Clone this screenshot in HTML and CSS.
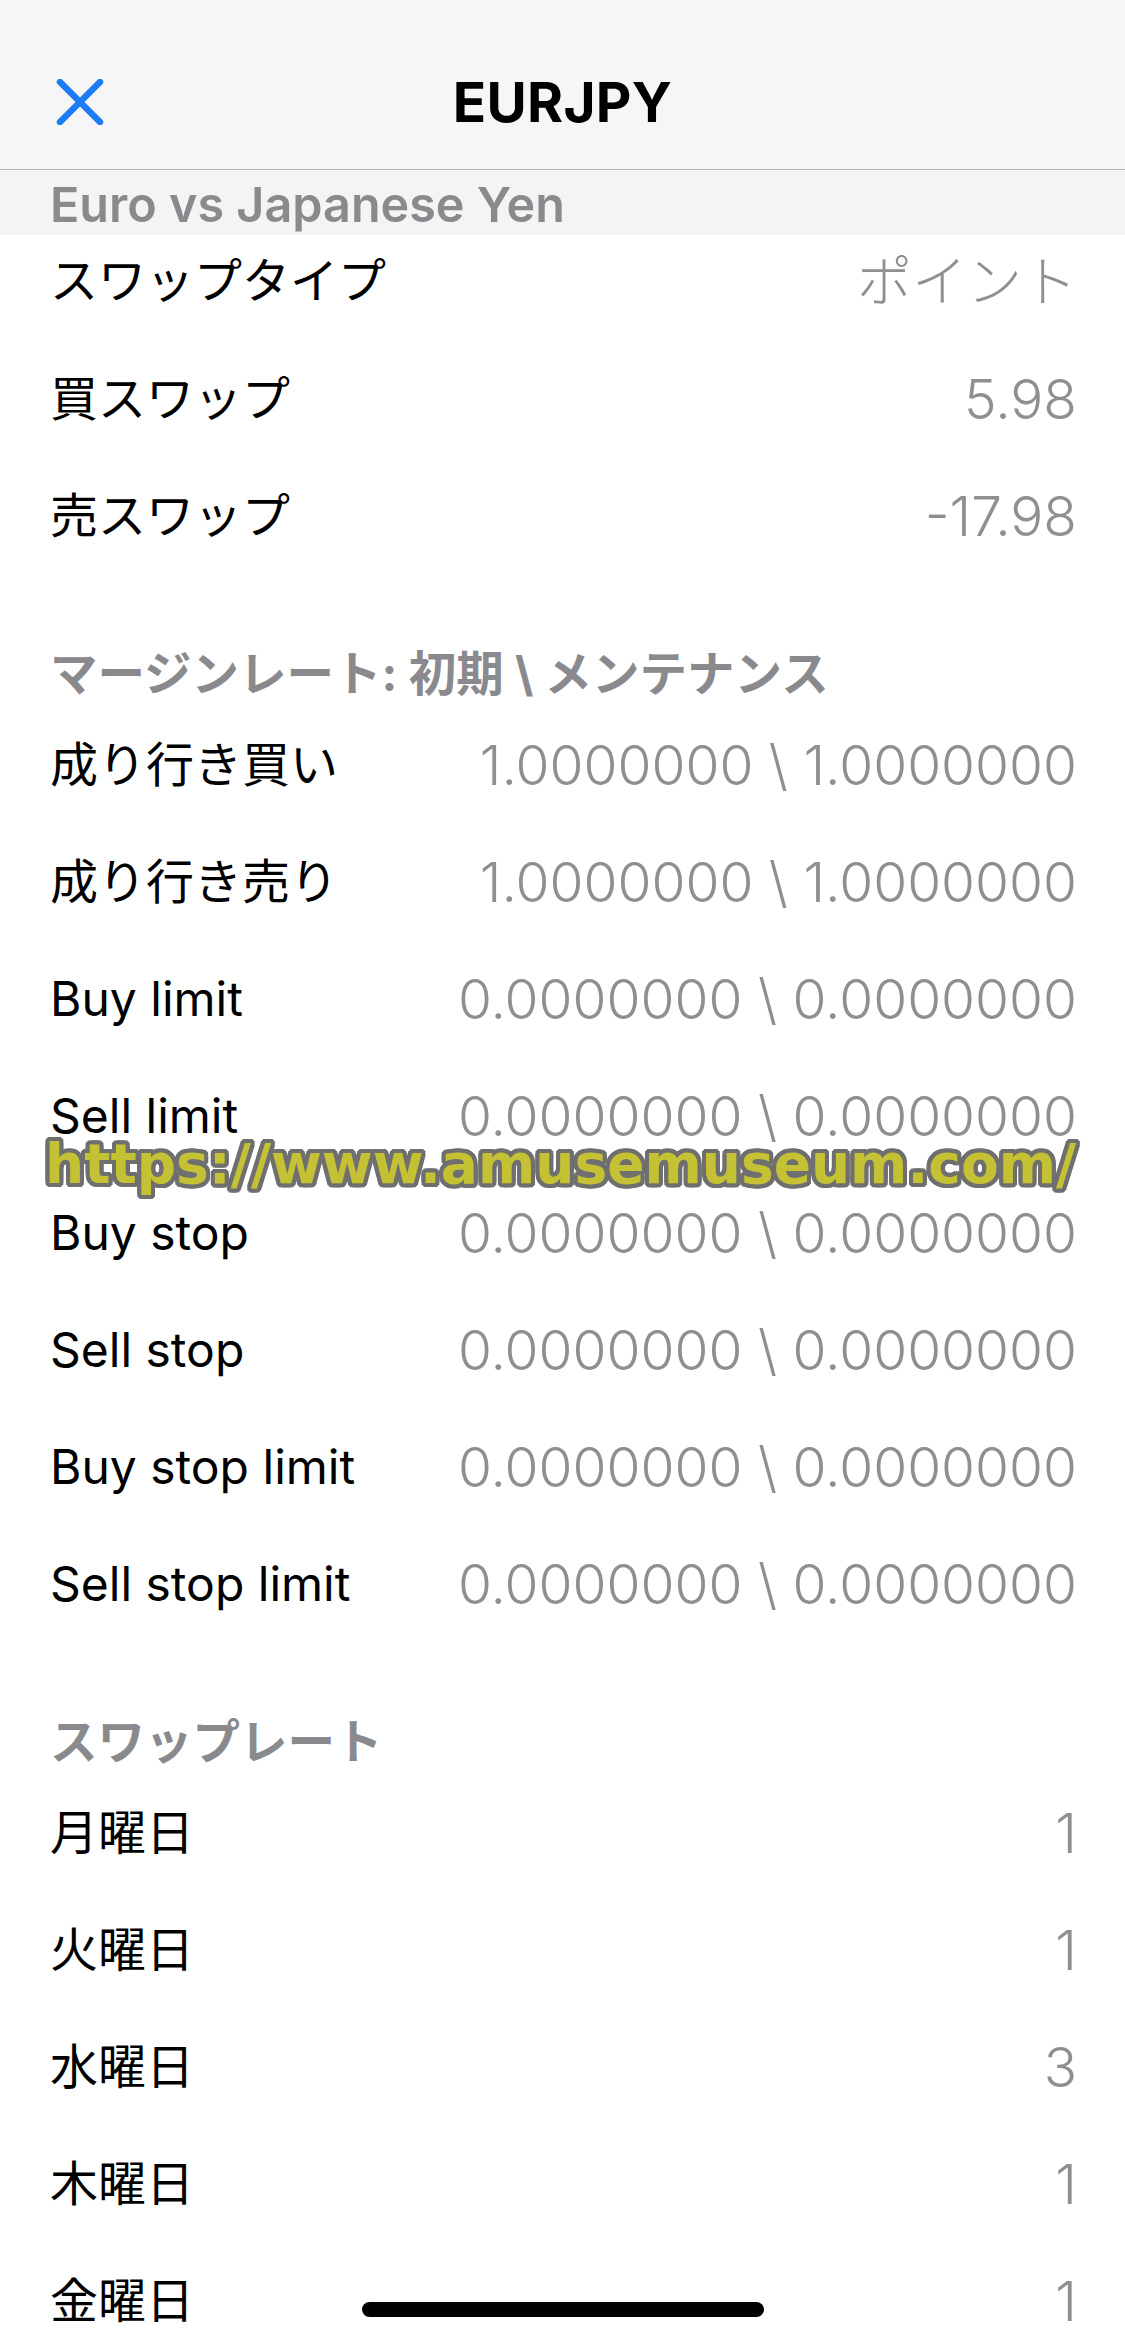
FILE: index.html
```html
<!DOCTYPE html>
<html lang="ja">
<head>
<meta charset="UTF-8">
<meta name="viewport" content="width=device-width, initial-scale=1.0">
<title>EURJPY</title>
<link rel="stylesheet" href="styles.css">
</head>
<body>
<div class="screen">
    <div class="navbar">
        <div class="nav-left">
            <svg class="close-icon" width="48" height="46" viewBox="0 0 48 46">
                <path d="M4 3 L44 43 M44 3 L4 43" stroke="#1c7cf4" stroke-width="6.5" stroke-linecap="round" fill="none"/>
            </svg>
        </div>
        <div class="nav-title">EURJPY</div>
        <div class="nav-right"></div>
    </div>
    <div class="subtitle">Euro vs Japanese Yen</div>

    <div class="row first">
        <span class="label">スワップタイプ</span>
        <span class="value">ポイント</span>
    </div>
    <div class="row">
        <span class="label">買スワップ</span>
        <span class="value">5.98</span>
    </div>
    <div class="row">
        <span class="label">売スワップ</span>
        <span class="value">-17.98</span>
    </div>

    <div class="section-head">マージンレート: 初期 \ メンテナンス</div>
    <div class="row">
        <span class="label">成り行き買い</span>
        <span class="value">1.0000000 \ 1.0000000</span>
    </div>
    <div class="row">
        <span class="label">成り行き売り</span>
        <span class="value">1.0000000 \ 1.0000000</span>
    </div>
    <div class="row">
        <span class="label">Buy limit</span>
        <span class="value">0.0000000 \ 0.0000000</span>
    </div>
    <div class="row">
        <span class="label">Sell limit</span>
        <span class="value">0.0000000 \ 0.0000000</span>
    </div>
    <div class="row">
        <span class="label">Buy stop</span>
        <span class="value">0.0000000 \ 0.0000000</span>
    </div>
    <div class="row">
        <span class="label">Sell stop</span>
        <span class="value">0.0000000 \ 0.0000000</span>
    </div>
    <div class="row">
        <span class="label">Buy stop limit</span>
        <span class="value">0.0000000 \ 0.0000000</span>
    </div>
    <div class="row">
        <span class="label">Sell stop limit</span>
        <span class="value">0.0000000 \ 0.0000000</span>
    </div>

    <div class="section-head">スワップレート</div>
    <div class="row">
        <span class="label">月曜日</span>
        <span class="value">1</span>
    </div>
    <div class="row">
        <span class="label">火曜日</span>
        <span class="value">1</span>
    </div>
    <div class="row">
        <span class="label">水曜日</span>
        <span class="value">3</span>
    </div>
    <div class="row">
        <span class="label">木曜日</span>
        <span class="value">1</span>
    </div>
    <div class="row">
        <span class="label">金曜日</span>
        <span class="value">1</span>
    </div>

    <div class="watermark">https://www.amusemuseum.com/</div>
    <div class="home-bar"></div>
</div>
</body>
</html>
```

FILE: styles.css
```css
html, body {
    margin: 0;
    padding: 0;
    background: #ffffff;
}
body {
    font-family: Inter, "Noto Sans CJK JP", sans-serif;
    color: #000;
}
.screen {
    position: relative;
    width: 1125px;
    height: 2341px;
    overflow: hidden;
}
.navbar {
    display: grid;
    grid-template-columns: 1fr auto 1fr;
    align-items: center;
    height: 134px;
    padding-top: 35px;
    background-color: #f6f6f6;
    border-bottom: 1px solid #b2b2b2;
}
.nav-left {
    padding-left: 56px;
    display: flex;
    align-items: center;
}
.close-icon {
    display: block;
}
.nav-title {
    font-size: 55px;
    font-weight: 700;
    line-height: 60px;
    letter-spacing: 0.3px;
}
.subtitle {
    height: 61px;
    padding: 4px 0 0 50px;
    background-color: #f4f4f4;
    color: #8a8a8e;
    font-size: 48.5px;
    font-weight: 600;
    line-height: 61px;
}
.row {
    display: flex;
    justify-content: space-between;
    align-items: center;
    height: 117px;
    padding: 0 48px 0 50px;
    box-sizing: border-box;
}
.row.first {
    height: 105px;
    padding-bottom: 13px;
}
.label {
    font-size: 48px;
    line-height: 60px;
    white-space: nowrap;
}
.value {
    color: #8e8e93;
    font-size: 55px;
    font-weight: 300;
    line-height: 60px;
    white-space: nowrap;
}
.section-head {
    display: flex;
    align-items: flex-end;
    height: 132px;
    padding: 0 50px 2px;
    box-sizing: border-box;
    color: #8a8a8e;
    font-size: 47.5px;
    font-weight: 700;
    line-height: 60px;
}
.watermark {
    position: absolute;
    top: 1137px;
    left: 45px;
    font-family: "DejaVu Sans", sans-serif;
    font-weight: bold;
    font-size: 55px;
    line-height: 55px;
    color: #c4c234;
    white-space: nowrap;
    text-shadow:
        4px 0 0 #6f6f6f, -4px 0 0 #6f6f6f, 0 4px 0 #6f6f6f, 0 -4px 0 #6f6f6f,
        3px 3px 0 #6f6f6f, -3px 3px 0 #6f6f6f, 3px -3px 0 #6f6f6f, -3px -3px 0 #6f6f6f,
        4px 2px 0 #6f6f6f, -4px 2px 0 #6f6f6f, 4px -2px 0 #6f6f6f, -4px -2px 0 #6f6f6f,
        2px 4px 0 #6f6f6f, -2px 4px 0 #6f6f6f, 2px -4px 0 #6f6f6f, -2px -4px 0 #6f6f6f;
}
.home-bar {
    position: absolute;
    left: 362px;
    top: 2302px;
    width: 402px;
    height: 15px;
    border-radius: 8px;
    background-color: #000;
}
```
